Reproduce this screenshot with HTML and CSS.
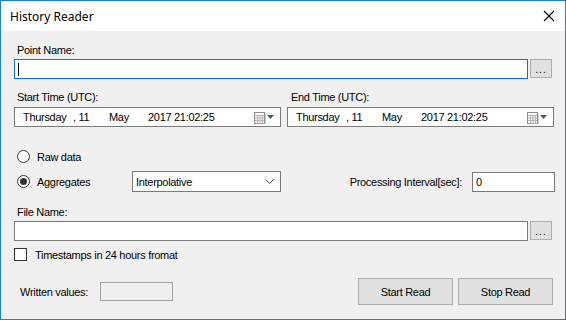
FILE: index.html
```
<!DOCTYPE html>
<html>

<head>
    <title>History Reader</title>
    <link rel="stylesheet" href="styles.css">
</head>

<body>
    <div class="window">
        <div class="titlebar">
            <span class="title">History Reader</span>
            <svg class="close" width="12" height="12" viewBox="0 0 12 12">
                <path d="M1 1 L11 11 M11 1 L1 11" stroke="#000" stroke-width="1.1" fill="none" />
            </svg>
        </div>

        <div class="content">
            <div class="label point-label">Point Name:</div>
            <div class="field-row">
                <div class="textbox wide focused"><span class="caret"></span></div>
                <div class="browse">...</div>
            </div>

            <div class="time-row">
                <div class="time-col">
                    <div class="label">Start Time (UTC):</div>
                    <div class="picker">
                        <span class="seg day">Thursday</span><span class="seg date">, 11</span><span class="seg month">May</span><span>2017 21:02:25</span>
                        <span class="picker-btn">
                            <svg width="13" height="13" viewBox="0 0 13 13">
                                <rect x="1.5" y="1.5" width="10" height="11" fill="#f4f4f4" stroke="#8c8c8c" />
                                <path d="M2 4.5 H11 M2 7 H11 M2 9.5 H11 M4.5 4 V12 M7 4 V12 M9.5 4 V12" stroke="#b8b8b8" />
                                <path d="M12.5 3 V13 H3" stroke="#cfcfcf" fill="none" />
                            </svg>
                            <svg width="8" height="5" viewBox="0 0 8 5">
                                <path d="M0 0 H7 L3.5 4 Z" fill="#3e5a80" />
                            </svg>
                        </span>
                    </div>
                </div>
                <div class="time-col end">
                    <div class="label">End Time (UTC):</div>
                    <div class="picker">
                        <span class="seg day">Thursday</span><span class="seg date">, 11</span><span class="seg month">May</span><span>2017 21:02:25</span>
                        <span class="picker-btn">
                            <svg width="13" height="13" viewBox="0 0 13 13">
                                <rect x="1.5" y="1.5" width="10" height="11" fill="#f4f4f4" stroke="#8c8c8c" />
                                <path d="M2 4.5 H11 M2 7 H11 M2 9.5 H11 M4.5 4 V12 M7 4 V12 M9.5 4 V12" stroke="#b8b8b8" />
                                <path d="M12.5 3 V13 H3" stroke="#cfcfcf" fill="none" />
                            </svg>
                            <svg width="8" height="5" viewBox="0 0 8 5">
                                <path d="M0 0 H7 L3.5 4 Z" fill="#3e5a80" />
                            </svg>
                        </span>
                    </div>
                </div>
            </div>

            <div class="radio-row">
                <span class="radio"></span>
                <span class="radio-text">Raw data</span>
            </div>
            <div class="agg-row">
                <span class="radio checked"></span>
                <span class="radio-text agg-text">Aggregates</span>
                <div class="combo">
                    <span>Interpolative</span>
                    <svg width="9" height="5" viewBox="0 0 9 5">
                        <path d="M0.5 0.5 L4.5 4.5 L8.5 0.5" stroke="#404040" fill="none" />
                    </svg>
                </div>
                <span class="interval-label">Processing Interval[sec]:</span>
                <div class="textbox interval">0</div>
            </div>

            <div class="label file-label">File Name:</div>
            <div class="field-row">
                <div class="textbox wide"></div>
                <div class="browse">...</div>
            </div>

            <div class="check-row">
                <span class="checkbox"></span>
                <span>Timestamps in 24 hours fromat</span>
            </div>

            <div class="bottom-row">
                <span class="written-label">Written values:</span>
                <div class="written-box"></div>
                <div class="buttons">
                    <button type="button">Start Read</button>
                    <button type="button">Stop Read</button>
                </div>
            </div>
        </div>
    </div>
</body>

</html>
```

FILE: styles.css
```
body {
    margin: 0;
    padding: 0;
    font-family: "Liberation Sans", Arial, sans-serif;
    font-size: 11px;
    letter-spacing: -0.3px;
    color: #000;
}

.window {
    width: 566px;
    height: 320px;
    box-sizing: border-box;
    border: 1px solid #1c7fd4;
    background-color: #f0f0f0;
    overflow: hidden;
}

.titlebar {
    height: 30px;
    background-color: #fff;
    display: flex;
    align-items: center;
    justify-content: space-between;
    padding: 0 10px 0 9px;
}

.title {
    font-family: "Noto Sans", sans-serif;
    font-size: 12px;
    letter-spacing: 0;
    color: #000;
}

.content {
    padding: 0 11px 0 13px;
}

.label {
    line-height: 13px;
    padding-left: 3px;
}

.point-label {
    padding-top: 13px;
    margin-bottom: 2px;
}

.field-row {
    display: flex;
    align-items: flex-start;
    gap: 2px;
}

.textbox {
    box-sizing: border-box;
    height: 20px;
    background-color: #fff;
    border: 1px solid #7a7a7a;
    line-height: 18px;
    padding-left: 3px;
}

.textbox.wide {
    width: 514px;
}

.textbox.focused {
    border-color: #0078d7;
    display: flex;
    align-items: center;
}

.caret {
    width: 1px;
    height: 13px;
    background-color: #000;
}

.browse {
    box-sizing: border-box;
    width: 22px;
    height: 19px;
    background-color: #e1e1e1;
    border: 1px solid #adadad;
    text-align: center;
    line-height: 19px;
    font-size: 10px;
    letter-spacing: 1px;
}

.time-row {
    display: flex;
    gap: 6px;
    margin-top: 12px;
}

.time-col {
    width: 267px;
}

.time-col.end .label {
    padding-left: 4px;
}

.time-col .label {
    margin-bottom: 3px;
}

.picker {
    box-sizing: border-box;
    height: 20px;
    border: 1px solid #7a7a7a;
    background-color: #fff;
    display: flex;
    align-items: center;
    padding-left: 8px;
    white-space: nowrap;
}

.seg {
    display: inline-block;
}

.seg.day {
    width: 50px;
}

.seg.date {
    width: 36px;
}

.seg.month {
    width: 39px;
}

.picker-btn {
    margin-left: auto;
    margin-right: 5px;
    display: flex;
    align-items: center;
    gap: 1px;
}

.radio-row {
    display: flex;
    align-items: center;
    margin-top: 23px;
    height: 13px;
    padding-left: 3px;
}

.radio {
    box-sizing: border-box;
    width: 13px;
    height: 13px;
    border: 1px solid #333;
    border-radius: 50%;
    background-color: #fff;
    display: flex;
    align-items: center;
    justify-content: center;
}

.radio.checked::after {
    content: "";
    width: 7px;
    height: 7px;
    border-radius: 50%;
    background-color: #333;
}

.radio-text {
    margin-left: 7px;
}

.agg-row {
    display: flex;
    align-items: center;
    margin-top: 8px;
    padding-left: 3px;
    height: 21px;
}

.agg-text {
    width: 95px;
}

.combo {
    box-sizing: border-box;
    width: 149px;
    height: 21px;
    border: 1px solid #7a7a7a;
    background-color: #fff;
    display: flex;
    align-items: center;
    justify-content: space-between;
    padding: 0 6px 0 3px;
}

.interval-label {
    margin-left: auto;
    margin-right: 10px;
}

.textbox.interval {
    width: 83px;
    margin-right: -1px;
}

.file-label {
    margin-top: 14px;
    margin-bottom: 2px;
}

.check-row {
    display: flex;
    align-items: center;
    margin-top: 7px;
    height: 13px;
}

.checkbox {
    box-sizing: border-box;
    width: 13px;
    height: 13px;
    border: 1px solid #333;
    background-color: #fff;
    margin-right: 8px;
}

.bottom-row {
    display: flex;
    align-items: center;
    margin-top: 17px;
    height: 27px;
}

.written-label {
    margin-left: 6px;
    width: 80px;
}

.written-box {
    box-sizing: border-box;
    width: 73px;
    height: 19px;
    border: 1px solid #a0a0a0;
    background-color: #f0f0f0;
}

.buttons {
    margin-left: auto;
    display: flex;
    gap: 5px;
    margin-right: 1px;
}

button {
    box-sizing: border-box;
    width: 95px;
    height: 27px;
    background-color: #e1e1e1;
    border: 1px solid #adadad;
    font-family: "Liberation Sans", Arial, sans-serif;
    font-size: 11px;
    letter-spacing: -0.3px;
    color: #000;
    padding: 0;
}
```
